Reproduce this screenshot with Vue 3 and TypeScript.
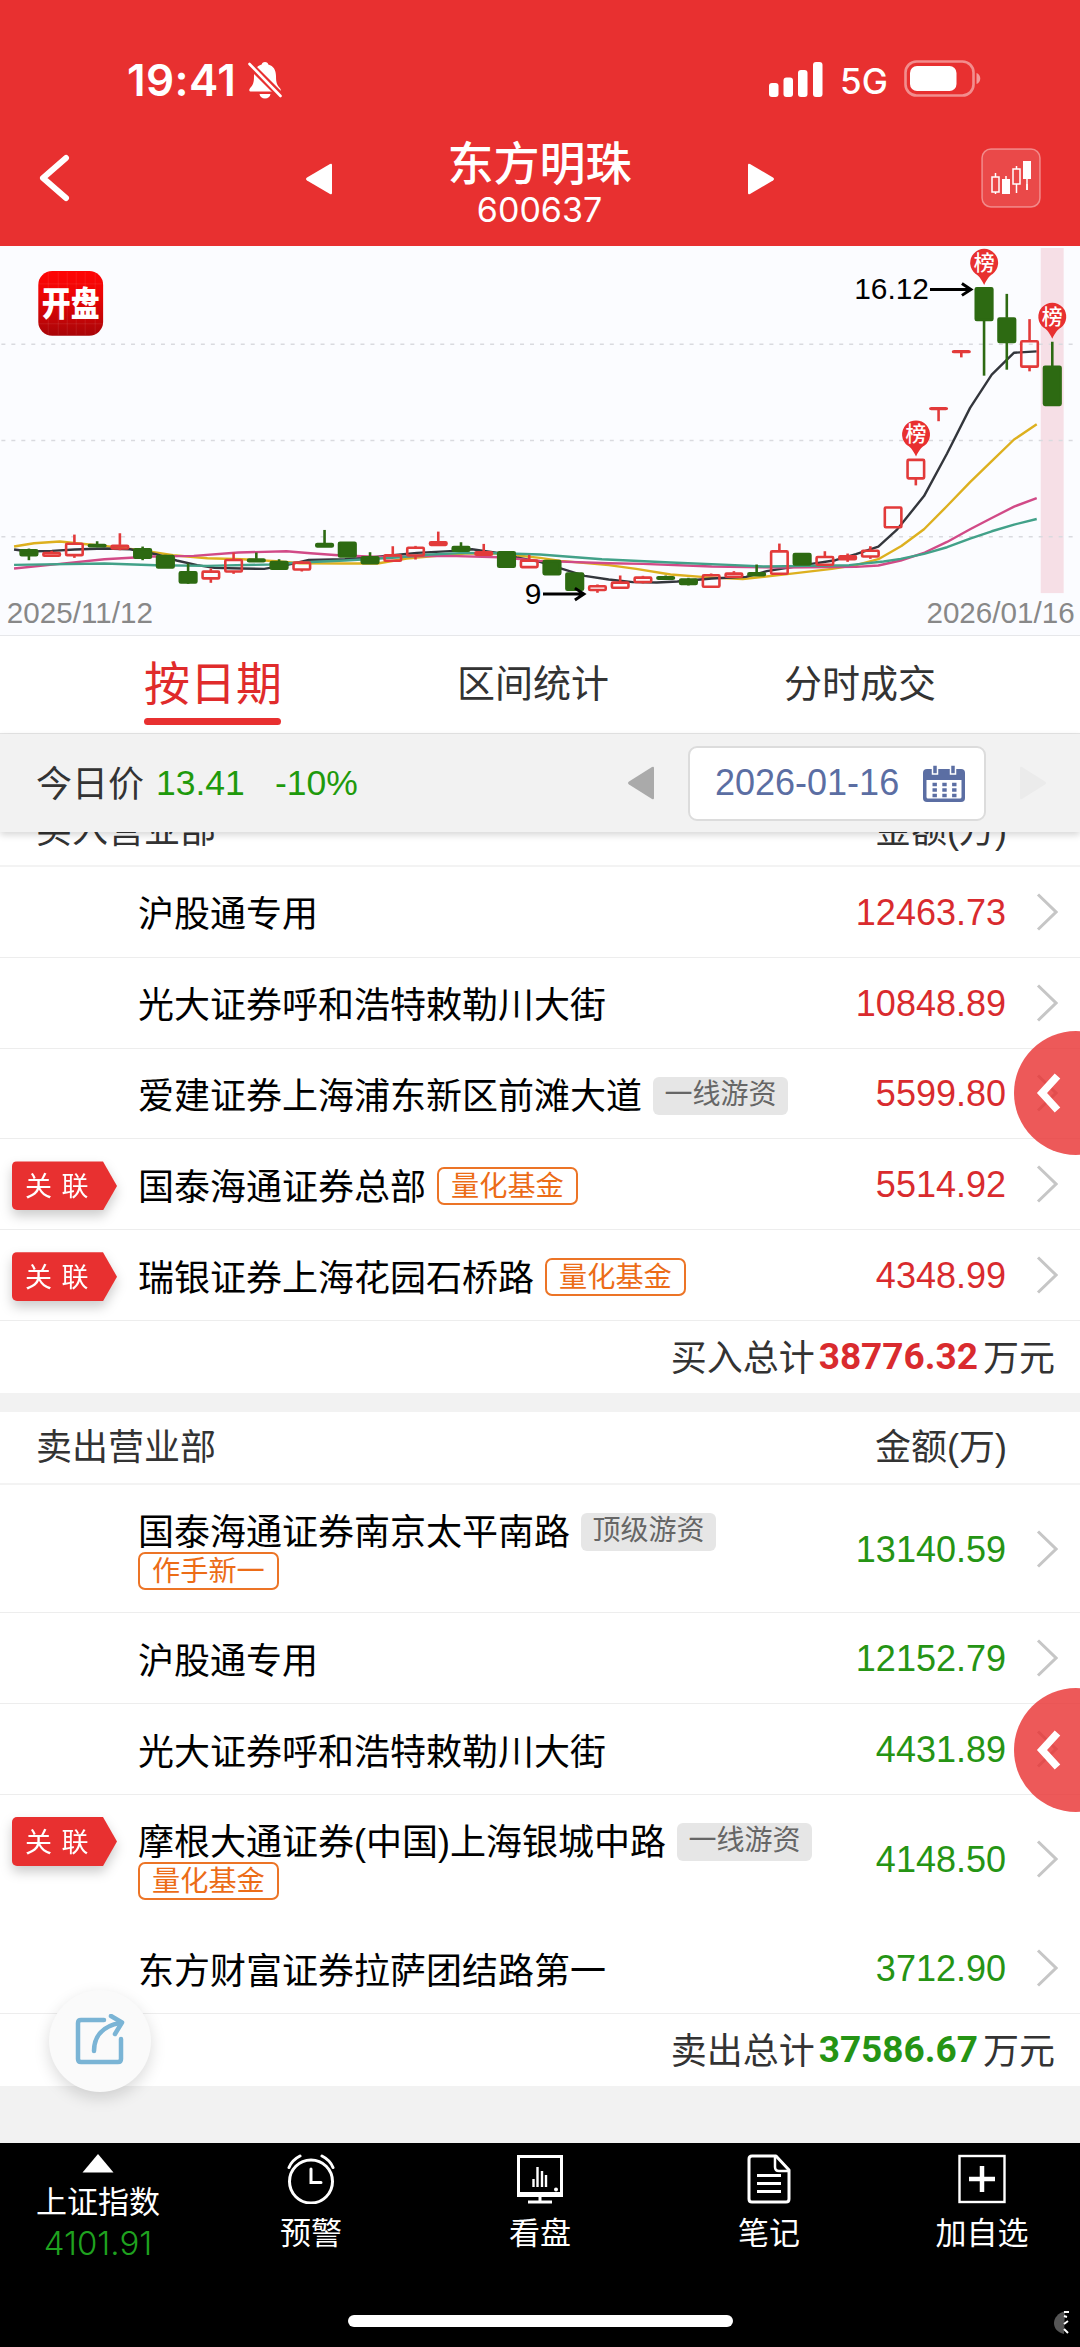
<script setup lang="ts">
interface Tag { text: string; kind: 'grey' | 'orange' }
interface Seat { name: string; amount: string; linked?: boolean; tags?: Tag[]; second?: Tag; plain?: boolean }
interface Candle { up: boolean; high: number; top: number; bottom: number; low: number }

const buy: Seat[] = [
  { name: '沪股通专用', amount: '12463.73' },
  { name: '光大证券呼和浩特敕勒川大街', amount: '10848.89' },
  { name: '爱建证券上海浦东新区前滩大道', amount: '5599.80', tags: [{ text: '一线游资', kind: 'grey' }] },
  { name: '国泰海通证券总部', amount: '5514.92', linked: true, tags: [{ text: '量化基金', kind: 'orange' }] },
  { name: '瑞银证券上海花园石桥路', amount: '4348.99', linked: true, tags: [{ text: '量化基金', kind: 'orange' }] },
]
const sell: Seat[] = [
  { name: '国泰海通证券南京太平南路', amount: '13140.59', tags: [{ text: '顶级游资', kind: 'grey' }], second: { text: '作手新一', kind: 'orange' } },
  { name: '沪股通专用', amount: '12152.79' },
  { name: '光大证券呼和浩特敕勒川大街', amount: '4431.89' },
  { name: '摩根大通证券(中国)上海银城中路', amount: '4148.50', linked: true, plain: true, tags: [{ text: '一线游资', kind: 'grey' }], second: { text: '量化基金', kind: 'orange' } },
  { name: '东方财富证券拉萨团结路第一', amount: '3712.90' },
]
const groups = [
  { key: 'buy', title: '买入营业部', seats: buy, totalLabel: '买入总计', total: '38776.32' },
  { key: 'sell', title: '卖出营业部', seats: sell, totalLabel: '卖出总计', total: '37586.67' },
]

// Chart data is kept on a fine 3136 x 1188 grid and projected to the 1080 x 389 view
const px = (v: number) => v / 2.9037
const py = (v: number) => (v - 18) / 3

// r = rising, g = falling; high, body top, body bottom, low
const raw = `g 928 931 949 963|r 935 939 951 951|r 886 911 949 956|g 906 915 922 924|r 882 917 929 933|g 922 928 957 963|g 947 948 986 986|g 973 997 1031 1034|r 988 995 1019 1031|r 940 960 998 1004|g 940 959 967 967|g 960 966 990 990|r 965 968 992 997|g 872 912 923 923|g 908 908 953 953|g 939 952 973 973|r 921 946 966 966|r 920 923 950 961|r 877 907 918 918|g 909 921 936 936|r 914 937 948 950|g 937 937 984 984|r 947 962 985 985|g 963 963 1006 1006|g 1001 1001 1053 1053|r 1036 1039 1054 1061|r 1009 1028 1047 1047|r 1010 1013 1030 1033|g 1009 1012 1020 1022|g 1016 1019 1036 1039|r 1003 1006 1044 1044|r 996 1001 1014 1014|g 976 1000 1009 1009|r 913 934 1005 1005|g 942 942 977 977|r 936 951 978 978|r 943 949 961 968|r 921 932 953 959|r 802 802 865 865|r 659 659 718 738|r 506 506 506 545|r 335 335 335 353|g 143 143 242 408|g 162 234 308 390|r 238 302 382 395|g 306 379 497 497`
const candles: Candle[] = raw.split('|').map((row) => {
  const [kind, ...n] = row.split(' ')
  const [high, top, bottom, low] = n.map((v) => py(Number(v)))
  return { up: kind === 'r', high, top, bottom, low }
})
const cx = (i: number) => 27.6 + i * 22.8

const lines = [
  { color: '#ddb01f', d: '37,922 95,912 170,907 240,914 300,920 400,932 500,948 600,957 700,960 800,966 870,972 1000,973 1095,973 1180,958 1300,947 1350,943 1450,943 1568,956 1628,965 1768,978 1848,989 1948,1006 2048,1014 2158,1020 2288,1005 2418,989 2488,978 2553,960 2620,920 2686,870 2753,800 2820,728 2883,665 2948,600 3014,554' },
  { color: '#33363c', d: '37,931 80,937 147,935 214,931 300,928 375,930 450,945 510,964 570,978 620,986 700,988 765,989 830,978 895,962 1000,960 1075,955 1140,948 1210,941 1320,935 1370,930 1450,942 1500,955 1568,968 1628,988 1698,1010 1768,1021 1838,1029 1908,1030 1968,1027 2068,1018 2168,1013 2228,996 2288,986 2358,974 2428,963 2488,945 2553,922 2608,870 2686,770 2753,642 2820,505 2883,405 2948,339 3014,335' },
  { color: '#d14a87', d: '37,988 170,974 300,960 440,952 560,950 690,940 830,936 900,942 980,948 1100,953 1300,950 1450,954 1568,965 1768,972 1868,974 2068,982 2268,985 2488,983 2553,979 2618,964 2688,940 2753,908 2820,870 2883,836 2948,802 3014,776' },
  { color: '#42a189', d: '37,977 300,973 450,978 600,980 780,976 870,970 1000,964 1150,955 1250,946 1350,941 1450,942 1568,946 1748,960 1948,970 2118,977 2218,982 2348,980 2468,978 2568,967 2618,959 2686,944 2753,924 2820,898 2883,876 2948,856 3014,839' },
].map((l) => ({
  color: l.color,
  points: l.d.split(' ').map((p) => { const [x, y] = p.split(',').map(Number); return `${px(x).toFixed(1)},${py(y).toFixed(1)}` }).join(' '),
}))
const pins = [{ x: 917, y: 175 }, { x: 985.3, y: 3 }, { x: 1053.6, y: 57 }]
const grid = [98.5, 195, 291.5]
</script>

<template>
  <div class="page">
    <header class="top">
      <div class="status">
        <span class="time">19:41</span>
        <svg class="bell" width="36" height="38" viewBox="0 0 36 38">
          <path d="M18 1c-2 0-3 1.200-3.300 2.400C9.500 4.800 7 9 7 15c0 7-1 9-4 12.200C1.500 29 2.500 30.500 4 30.500h28c1.500 0 2.500-1.500 1-3.300C30 24 29 22 29 15c0-6-2.500-10.200-7.700-11.600C21 2.200 20 1 18 1z" fill="#fff" />
          <path d="M12.500 33h11c-.5 2.800-2.500 4.500-5.500 4.500s-5-1.700-5.500-4.500z" fill="#fff" />
          <path d="M1 2l34 34" stroke="#e83030" stroke-width="7" />
          <path d="M2.500 3l31 32" stroke="#fff" stroke-width="2.600" stroke-linecap="round" />
        </svg>
        <span class="space" />
        <svg class="signal" width="54" height="36" viewBox="0 0 54 36" fill="#fff">
          <rect x="0" y="21" width="9.500" height="14" rx="3" /><rect x="14.500" y="15.500" width="9.500" height="19.500" rx="3" />
          <rect x="29" y="8" width="9.500" height="27" rx="3" /><rect x="44" y="0" width="9.500" height="35" rx="3" />
        </svg>
        <span class="net">5G</span>
        <svg class="battery" width="77" height="38" viewBox="0 0 77 38">
          <rect x="1.500" y="1.500" width="68" height="34" rx="11" fill="none" stroke="#fff" stroke-opacity=".45" stroke-width="2.600" />
          <rect x="6" y="6" width="46.500" height="25" rx="7" fill="#fff" />
          <path d="M72.500 13c5 1.500 5 9.500 0 11z" fill="#fff" fill-opacity=".5" />
        </svg>
      </div>
      <div class="bar">
        <svg class="back" width="34" height="48" viewBox="0 0 34 48"><path d="M29 4L6 24l23 20" fill="none" stroke="#fff" stroke-width="6" stroke-linecap="round" stroke-linejoin="round" /></svg>
        <div class="switcher">
          <svg width="28" height="32" viewBox="0 0 28 32"><path d="M27 2v28q0 2-2 1L2 17.500q-2-1.500 0-3L25 1q2-1 2 1z" fill="#fff" /></svg>
          <div class="stock"><h1>东方明珠</h1><span>600637</span></div>
          <svg width="28" height="32" viewBox="0 0 28 32"><path d="M1 2v28q0 2 2 1l23-13.500q2-1.500 0-3L3 1Q1 0 1 2z" fill="#fff" /></svg>
        </div>
        <svg class="kbtn" width="60" height="60" viewBox="0 0 60 60">
          <rect x="1" y="1" width="58" height="58" rx="9" fill="#fff" fill-opacity=".12" stroke="#fff" stroke-opacity=".4" stroke-width="1.500" />
          <g stroke="#fff" stroke-width="1.500" fill="none"><path d="M14.500 25v4M14.500 44v2M35.500 18v3M35.500 36v9M46 36v6M25 28v3" /><rect x="11" y="29" width="7" height="15" /><rect x="32" y="21" width="7" height="15" /></g>
          <rect x="21" y="31" width="8" height="15" fill="#fff" /><rect x="42" y="13" width="8" height="18" fill="#fff" /><path d="M46 30v12" stroke="#fff" stroke-width="1.500" />
        </svg>
      </div>
    </header>

    <svg class="chart" width="1080" height="390" viewBox="0 0 1080 390">
      <defs><linearGradient id="logo" x1="0" y1="0" x2="0" y2="1"><stop offset="0" stop-color="#ff0505" /><stop offset=".35" stop-color="#ee0505" /><stop offset="1" stop-color="#a80508" /></linearGradient></defs>
      <rect x="1042" y="2" width="23" height="346" fill="#f6dfe6" />
      <line v-for="g in grid" :key="g" x1="0" x2="1080" :y1="g" :y2="g" stroke="#d9dadf" stroke-width="1.500" stroke-dasharray="4 6" />
      <polyline v-for="l in lines" :key="l.color" :points="l.points" fill="none" :stroke="l.color" stroke-width="2.400" stroke-linejoin="round" />
      <g v-for="(c, i) in candles" :key="i" :stroke="c.up ? '#e23a3a' : '#2d6a12'" stroke-width="2.600">
        <line v-if="c.high < c.top" :x1="cx(i)" :x2="cx(i)" :y1="c.high" :y2="c.top" />
        <line v-if="c.low > c.bottom" :x1="cx(i)" :x2="cx(i)" :y1="c.bottom" :y2="c.low" />
        <rect :x="cx(i) - 8.300" :y="c.top + (c.bottom > c.top ? .8 : 0)" width="16.600" :height="Math.max(c.bottom - c.top - 1.200, .6)" rx="1" stroke-linejoin="round" :fill="c.up ? 'none' : '#2d6a12'" />
      </g>
      <g v-for="p in pins" :key="p.x">
        <path :transform="`translate(${p.x} ${p.y})`" d="M0 36C-3 30-5 27-8.500 25A14 14 0 1 1 8.500 25C5 27 3 30 0 36z" fill="#e83030" />
        <text :x="p.x" :y="p.y + 21" class="pin">榜</text>
      </g>
      <g fill="none" stroke="#000" stroke-width="3"><path d="M931 43.500h39M963 37.500l9 6-9 6M543 349h39M575 343l9 6-9 6" /></g>
      <text x="930" y="53" text-anchor="end" class="mark">16.12</text>
      <text x="541.500" y="359" text-anchor="end" class="mark">9</text>
      <text x="5.500" y="378" class="day">2025/11/12</text>
      <text x="1076" y="378" text-anchor="end" class="day">2026/01/16</text>
      <rect x="37" y="25" width="65" height="65" rx="14" fill="url(#logo)" />
      <path d="M47 26v63M57 26v63M66 26v63M75 26v63M84 26v63M94 26v63M38 38h63M38 78h63" stroke="#fff" stroke-opacity=".09" />
      <text transform="translate(69.500 70) scale(1 1.180)" class="brand">开盘</text>
    </svg>

    <nav class="tabs">
      <span class="tab on">按日期</span><span class="tab">区间统计</span><span class="tab">分时成交</span>
    </nav>

    <section class="datebar">
      <span class="today">今日价</span><span class="price">13.41</span><span class="pct">-10%</span>
      <span class="space" />
      <svg width="28" height="34" viewBox="0 0 28 34"><path d="M27 2v30q0 2-2 1L2 18.500q-2-1.500 0-3L25 1q2-1 2 1z" fill="#aaa" /></svg>
      <div class="picker">
        <span>2026-01-16</span>
        <svg width="42" height="40" viewBox="0 0 42 40">
          <path d="M4 6h34q4 0 4 4v25q0 4-4 4H4q-4 0-4-4V10q0-4 4-4z" fill="#5b6ea3" />
          <path d="M3.500 17h35v17q0 1.500-1.500 1.500H5q-1.500 0-1.500-1.500z" fill="#fff" />
          <path d="M9.500 2h5v9h-5zM27.500 2h5v9h-5z" fill="#5b6ea3" stroke="#fff" stroke-width="1.500" />
          <path d="M9.500 21.500h24M9.500 27h24M9.500 32.500h24" stroke="#5b6ea3" stroke-width="3.600" stroke-dasharray="4.400 5.400" />
        </svg>
      </div>
      <svg width="28" height="34" viewBox="0 0 28 34"><path d="M1 2v30q0 2 2 1l23-14.500q2-1.500 0-3L3 1Q1 0 1 2z" fill="#ebebeb" /></svg>
    </section>

    <main class="scroll">
      <section v-for="g in groups" :key="g.key" class="group" :class="g.key">
        <div class="head"><span>{{ g.title }}</span><span>金额(万)</span></div>
        <div v-for="s in g.seats" :key="s.name" class="row" :class="{ tall: s.second, plain: s.plain }">
          <div class="link"><div v-if="s.linked" class="ribbon"><span>关 联</span></div></div>
          <div class="who">
            <div class="line"><span class="name">{{ s.name }}</span><span v-for="t in s.tags" :key="t.text" class="tag" :class="t.kind">{{ t.text }}</span></div>
            <div v-if="s.second" class="line under"><span class="tag" :class="s.second.kind">{{ s.second.text }}</span></div>
          </div>
          <span class="amount">{{ s.amount }}</span>
          <svg class="more" width="22" height="38" viewBox="0 0 22 38"><path d="M2 1.500L20 19 2 36.500" fill="none" stroke="#c6c6c6" stroke-width="3" /></svg>
        </div>
        <div class="total"><span>{{ g.totalLabel }}</span><b>{{ g.total }}</b><span>万元</span></div>
        <div class="drawer"><svg width="28" height="40" viewBox="0 0 28 40"><path d="M23.500 3L8 20l15.500 17" fill="none" stroke="#fff" stroke-width="7.500" /></svg></div>
      </section>
      <div class="share">
        <svg width="50" height="54" viewBox="0 0 50 54" fill="none" stroke="#7ab4d5" stroke-width="4.500">
          <path d="M29 6H6Q3 6 3 9v36q0 3 3 3h37q3 0 3-3V25" stroke-linecap="round" />
          <path d="M19 37C19 22 28 12 45 9" stroke-linecap="round" /><path d="M36 2l11 6.500L40 20" stroke-linecap="round" stroke-linejoin="round" />
        </svg>
      </div>
    </main>

    <footer class="nav">
      <div class="item index"><svg width="32" height="19" viewBox="0 0 32 19"><path d="M16 0l15.500 18.500H.5z" fill="#fff" /></svg><span>上证指数</span><em>4101.91</em></div>
      <div class="item"><svg width="48" height="50" viewBox="0 0 48 50" fill="none" stroke="#fff" stroke-width="3"><circle cx="24" cy="27.500" r="21.500" /><path d="M24 15v13.500h10M2 13.500Q5 6 13 2M46 13.500Q43 6 35 2" stroke-linecap="round" /></svg><span>预警</span></div>
      <div class="item"><svg width="48" height="50" viewBox="0 0 48 50" fill="none" stroke="#fff"><rect x="2.500" y="2.500" width="43" height="39" stroke-width="3" /><path d="M2 40h44" stroke-width="4" /><path d="M24 42v5M12 48h24" stroke-width="3" /><path d="M17.500 25v8M21.500 13v20M26 17v16M30 21v12" stroke-width="2.400" /><circle cx="40" cy="35.500" r="2" fill="#fff" stroke="none" /></svg><span>看盘</span></div>
      <div class="item"><svg width="48" height="50" viewBox="0 0 48 50" fill="none" stroke="#fff" stroke-width="3"><path d="M7 2h24l13 14v29q0 3-3 3H7q-3 0-3-3V5q0-3 3-3z" stroke-linejoin="round" /><path d="M30 3v10q0 4 4 4h9" stroke-width="2.500" /><path d="M12 21.500h24M12 29.500h24M12 37.500h24" /></svg><span>笔记</span></div>
      <div class="item"><svg width="48" height="50" viewBox="0 0 48 50" fill="none" stroke="#fff"><rect x="1.500" y="2" width="45" height="46" stroke-width="2.400" /><path d="M24 12v26M11 25h26" stroke-width="4.500" /></svg><span>加自选</span></div>
      <div class="home" />
      <svg class="corner" width="16" height="24" viewBox="0 0 16 24"><path d="M11 0C4 2 0 7 0 12s3 9 10 11z" fill="#555" /><path d="M10 1h5M10 5l3 1M14 10l-4 3M10 18l4 4" stroke="#fff" stroke-width="2" /></svg>
    </footer>
  </div>
</template>

<style>
body { margin: 0; }
</style>

<style scoped>
.page { width: 1080px; height: 2347px; overflow: hidden; display: flex; flex-direction: column; background: #fff; font-family: "Liberation Sans", "Noto Sans CJK SC", sans-serif; color: #333; }
.page svg { display: block; flex: none; }
.space { flex: 1; }
.top { height: 246px; flex: none; background: #e83030; color: #fff; }
.status { height: 98px; padding: 60px 99px 0 127px; box-sizing: border-box; display: flex; align-items: flex-start; }
.time { width: 112px; font: 600 44px/41px Inter, sans-serif; letter-spacing: .4px; white-space: nowrap; }
.bell { margin: 1px 0 0 8px; }
.signal { margin-top: 2px; }
.net { font: 500 35px/43px Inter, sans-serif; width: 50px; margin: 0 14px 0 17px; }
.bar { height: 148px; display: flex; align-items: flex-start; justify-content: space-between; padding: 0 39px 0 37px; }
.back { margin-top: 56px; }
.switcher { width: 470px; display: flex; justify-content: space-between; margin-left: 27px; padding-top: 34px; }
.switcher > svg { margin-top: 31px; }
.stock { display: flex; flex-direction: column; align-items: center; }
h1 { margin: 0; font: 500 46px/56px "Noto Sans CJK SC", sans-serif; }
.stock span { font: 400 34px/36px Inter, sans-serif; margin-top: 4px; }
.kbtn { margin-top: 50px; }
.chart { height: 390px; background: #fbfcff; border-bottom: 1px solid #e6e7ea; box-sizing: border-box; }
.pin { font: 500 21px "Noto Sans CJK SC", sans-serif; fill: #fff; text-anchor: middle; }
.mark { font-size: 30px; fill: #000; }
.day { font-size: 29.700px; fill: #888; }
.brand { font: 900 29px "Noto Sans CJK SC", sans-serif; fill: #fff; text-anchor: middle; }
.tabs { height: 97px; flex: none; display: flex; padding-left: 144px; align-items: flex-start; border-bottom: 1px solid #e6e6e6; box-sizing: content-box; }
.tab { flex: none; font-size: 38px; line-height: 96px; white-space: nowrap; }
.tab:nth-child(2) { width: 327px; }
.tab.on { width: 137px; margin-right: 176px; font-size: 46px; line-height: 82px; color: #e02b2b; height: 82px; padding-top: 7px; box-sizing: border-box; position: relative; }
.tab.on::after { content: ""; position: absolute; left: 0; right: 0; top: 82px; height: 7px; border-radius: 4px; background: #e83030; }
.datebar { height: 98px; flex: none; background: #f2f2f2; padding: 0 33px 0 36px; display: flex; align-items: center; font-size: 35px; position: relative; z-index: 2; box-shadow: 0 3px 7px rgba(0, 0, 0, .16); }
.today { font-size: 36px; margin: 0 12px 4px 0; }
.price, .pct { color: #1f9a0c; font-size: 35.500px; }
.price { width: 119px; }
.picker { width: 298px; height: 75px; box-sizing: border-box; border: 2px solid #dcdcdc; border-radius: 9px; background: #fff; margin: 0 33px; padding: 0 19px 0 25px; display: flex; align-items: center; justify-content: space-between; color: #5b6ea3; font-size: 36px; }
.scroll { height: 1311px; flex: none; background: #f2f2f2; position: relative; overflow: hidden; }
.group { background: #fff; position: relative; }
.buy { margin: -38px 0 19px; }
.head { height: 73px; box-sizing: border-box; border-bottom: 2px solid #f3f3f3; padding: 0 73px 6px 36px; display: flex; justify-content: space-between; align-items: center; font-size: 36px; }
.row { height: 90.800px; box-sizing: border-box; border-bottom: 1.500px solid #ededed; display: flex; align-items: center; padding-right: 22px; font-size: 36px; color: #000; }
.row.tall { height: 128.500px; }
.row.plain { border-color: transparent; }
.link { width: 138px; flex: none; align-self: flex-start; padding: 22px 0 0 12px; box-sizing: border-box; }
.ribbon { width: 105px; height: 49px; filter: drop-shadow(0 6px 6px rgba(0, 0, 0, .2)); }
.ribbon span { display: block; width: 105px; height: 49px; box-sizing: border-box; padding-left: 13px; background: #e83030; color: #fff; font-size: 27px; line-height: 52px; letter-spacing: 1px; border-radius: 5px 0 0 5px; clip-path: polygon(0 0, 91px 0, 105px 50%, 91px 100%, 0 100%); }
.who { flex: 1; }
.line { height: 39px; display: flex; align-items: center; white-space: nowrap; }
.name { margin: 0 11px 1px 0; }
.tag { box-sizing: border-box; height: 38px; font-size: 28px; line-height: 36px; border-radius: 6px; }
.tag.grey { padding: 0 11.500px; background: #e6e6e6; color: #666; margin-top: 6px; }
.tag.orange { padding: 0 12px; border: 2.500px solid #ec7426; color: #ec6c17; border-radius: 7px; line-height: 35px; margin-top: 3px; font-size: 28.200px; }
.under .tag.orange { margin-top: 6px; }
.amount { font-size: 36px; margin: 2px 30px 0 0; }
.buy .amount, .buy b { color: #d92b2e; }
.sell .amount, .sell b { color: #259414; }
.total { height: 72px; display: flex; align-items: center; justify-content: flex-end; padding-right: 25px; font-size: 36px; }
.total span { margin-bottom: 4px; }
.total b { font: 700 37px/40px Roboto, sans-serif; margin: 0 5px 0 4px; }
.drawer { position: absolute; right: -58px; top: 237px; width: 124px; height: 124px; border-radius: 50%; background: rgba(232, 48, 48, .8); display: flex; align-items: center; padding-left: 20px; box-sizing: border-box; }
.sell .drawer { top: 276px; }
.share { position: absolute; left: 49px; top: 1158px; width: 102px; height: 102px; border-radius: 50%; background: #fafafa; box-shadow: 0 6px 16px rgba(0, 0, 0, .15); display: flex; align-items: center; justify-content: center; }
.nav { height: 204px; flex: none; background: #000; color: #fff; position: relative; display: grid; grid-template-columns: 196px 230px 228px 230px 196px; font-size: 31px; }
.item { display: flex; flex-direction: column; align-items: center; padding-top: 11px; box-sizing: border-box; line-height: 40px; white-space: nowrap; }
.item span { margin-top: 10px; }
.item em { font: 300 33px/38px Inter, sans-serif; color: #1fa21f; margin-top: 1px; }
.home { position: absolute; left: 348px; top: 172px; width: 385px; height: 12px; border-radius: 6px; background: #fff; }
.corner { position: absolute; left: 1054px; top: 168px; }
</style>
